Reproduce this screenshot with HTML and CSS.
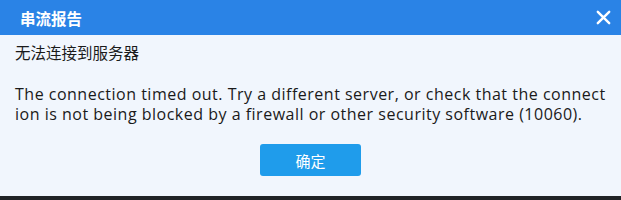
FILE: index.html
```html
<!DOCTYPE html>
<html lang="zh-CN">
<head>
  <meta charset="UTF-8" />
  <title>串流报告</title>
  <link rel="stylesheet" href="styles.css">
</head>
<body>
  <div class="dialog">
    <header class="titlebar">
      <div class="title">串流报告</div>
      <button class="close-btn" aria-label="关闭">
        <svg width="15" height="15" viewBox="0 0 15 15">
          <path d="M1.8 1.8 L13.2 13.2 M13.2 1.8 L1.8 13.2" stroke="#fff" stroke-width="2.4" stroke-linecap="round"/>
        </svg>
      </button>
    </header>

    <section class="content">
      <div class="subtitle">无法连接到服务器</div>
      <p class="message">The connection timed out. Try a different server, or check that the connection is not being blocked by a firewall or other security software (10060).</p>
      <div class="actions">
        <button class="ok-btn">确定</button>
      </div>
    </section>
  </div>
  <div class="taskbar"></div>
</body>
</html>
```

FILE: styles.css
```css
body {
  margin: 0;
  padding: 0;
  width: 621px;
  height: 200px;
  overflow: hidden;
  background: #f1f6fd;
  font-family: 'Noto Sans CJK SC', 'Noto Sans', sans-serif;
  color: #1a1a1a;
}

.dialog {
  height: 196px;
  display: flex;
  flex-direction: column;
}

.titlebar {
  height: 35px;
  background: #2a83e6;
  display: flex;
  justify-content: space-between;
  align-items: center;
  padding: 0 10px 0 20px;
}

.title {
  color: #fff;
  font-size: 15.5px;
  font-weight: bold;
}

.close-btn {
  background: none;
  border: none;
  padding: 0;
  width: 16px;
  height: 16px;
  display: flex;
  align-items: center;
  justify-content: center;
  cursor: pointer;
}

.content {
  flex: 1;
  padding: 6px 15px 0 15px;
}

.subtitle {
  font-size: 15.5px;
  line-height: 22px;
}

.message {
  margin: 21px 0 0 0;
  font-family: 'Open Sans', 'Noto Sans CJK SC', sans-serif;
  font-size: 16px;
  letter-spacing: 0.5px;
  line-height: 20px;
  width: 592px;
  word-break: break-all;
}

.actions {
  display: flex;
  justify-content: center;
  margin-top: 20px;
}

.ok-btn {
  width: 101px;
  height: 32px;
  background: #1f9ceb;
  border: none;
  border-radius: 3px;
  color: #fff;
  font-family: inherit;
  font-size: 15px;
  cursor: pointer;
}

.taskbar {
  height: 4px;
  background: #202326;
}
```
